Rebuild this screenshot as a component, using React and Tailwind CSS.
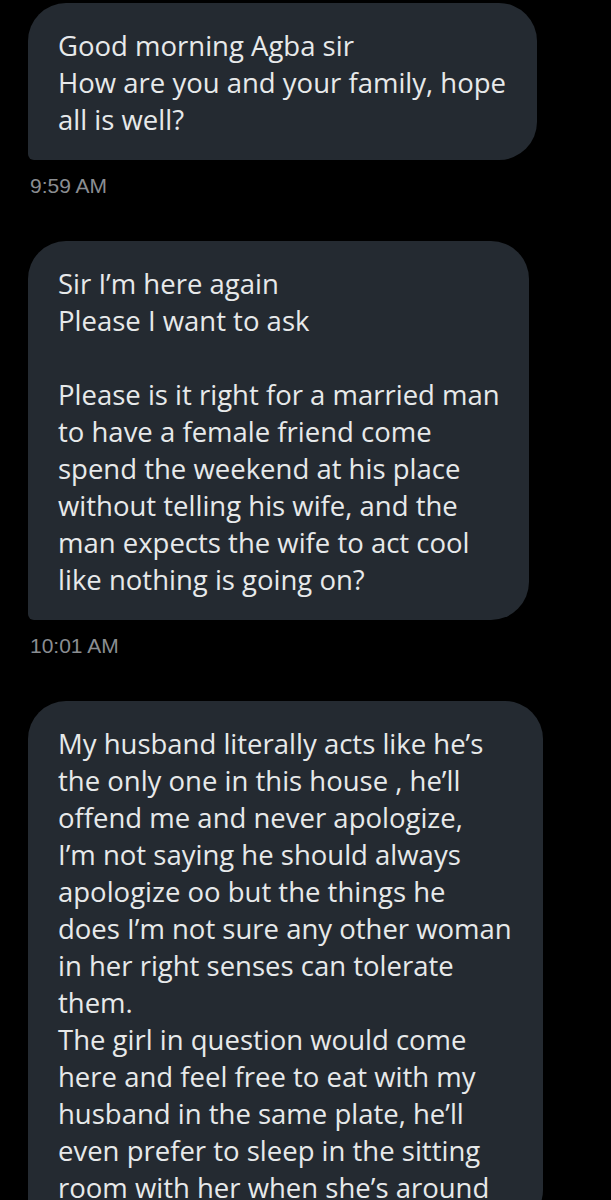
export default function App() {
    const messages = [
        {
            width: "w-[509px]",
            time: "9:59 AM",
            lines: [
                "Good morning Agba sir",
                "How are you and your family, hope",
                "all is well?",
            ],
        },
        {
            width: "w-[501px]",
            time: "10:01 AM",
            lines: [
                "Sir I’m here again",
                "Please I want to ask",
                "",
                "Please is it right for a married man",
                "to have a female friend come",
                "spend the weekend at his place",
                "without telling his wife, and the",
                "man expects the wife to act cool",
                "like nothing is going on?",
            ],
        },
        {
            width: "w-[515px]",
            time: null,
            lines: [
                "My husband literally acts like he’s",
                "the only one in this house , he’ll",
                "offend me and never apologize,",
                "I’m not saying he should always",
                "apologize oo but the things he",
                "does I’m not sure any other woman",
                "in her right senses can tolerate",
                "them.",
                "The girl in question would come",
                "here and feel free to eat with my",
                "husband in the same plate, he’ll",
                "even prefer to sleep in the sitting",
                "room with her when she’s around",
            ],
        },
    ];

    return (
        <div className="h-[1200px] overflow-hidden bg-black pt-[3px] pl-[28px]">
            {messages.map((msg, i) => (
                <div key={i} className="flex flex-col items-start">
                    <div
                        className={`${msg.width} rounded-[38px] rounded-bl-[6px] bg-[#242a31] pl-[30px] pr-[16px] pt-[24px] pb-[22px] text-[#e7e9ea] text-[27.5px] leading-[37px] font-['Open_Sans',sans-serif]`}
                    >
                        {msg.lines.map((line, j) => (
                            <div key={j} className="whitespace-nowrap h-[37px]">
                                {line}
                            </div>
                        ))}
                    </div>
                    {msg.time && (
                        <div className="mt-[14px] mb-[43px] pl-[2px] text-[21px] leading-[24px] text-[#8a8d91] font-['Liberation_Sans',Arial,sans-serif]">
                            {msg.time}
                        </div>
                    )}
                </div>
            ))}
        </div>
    );
}
